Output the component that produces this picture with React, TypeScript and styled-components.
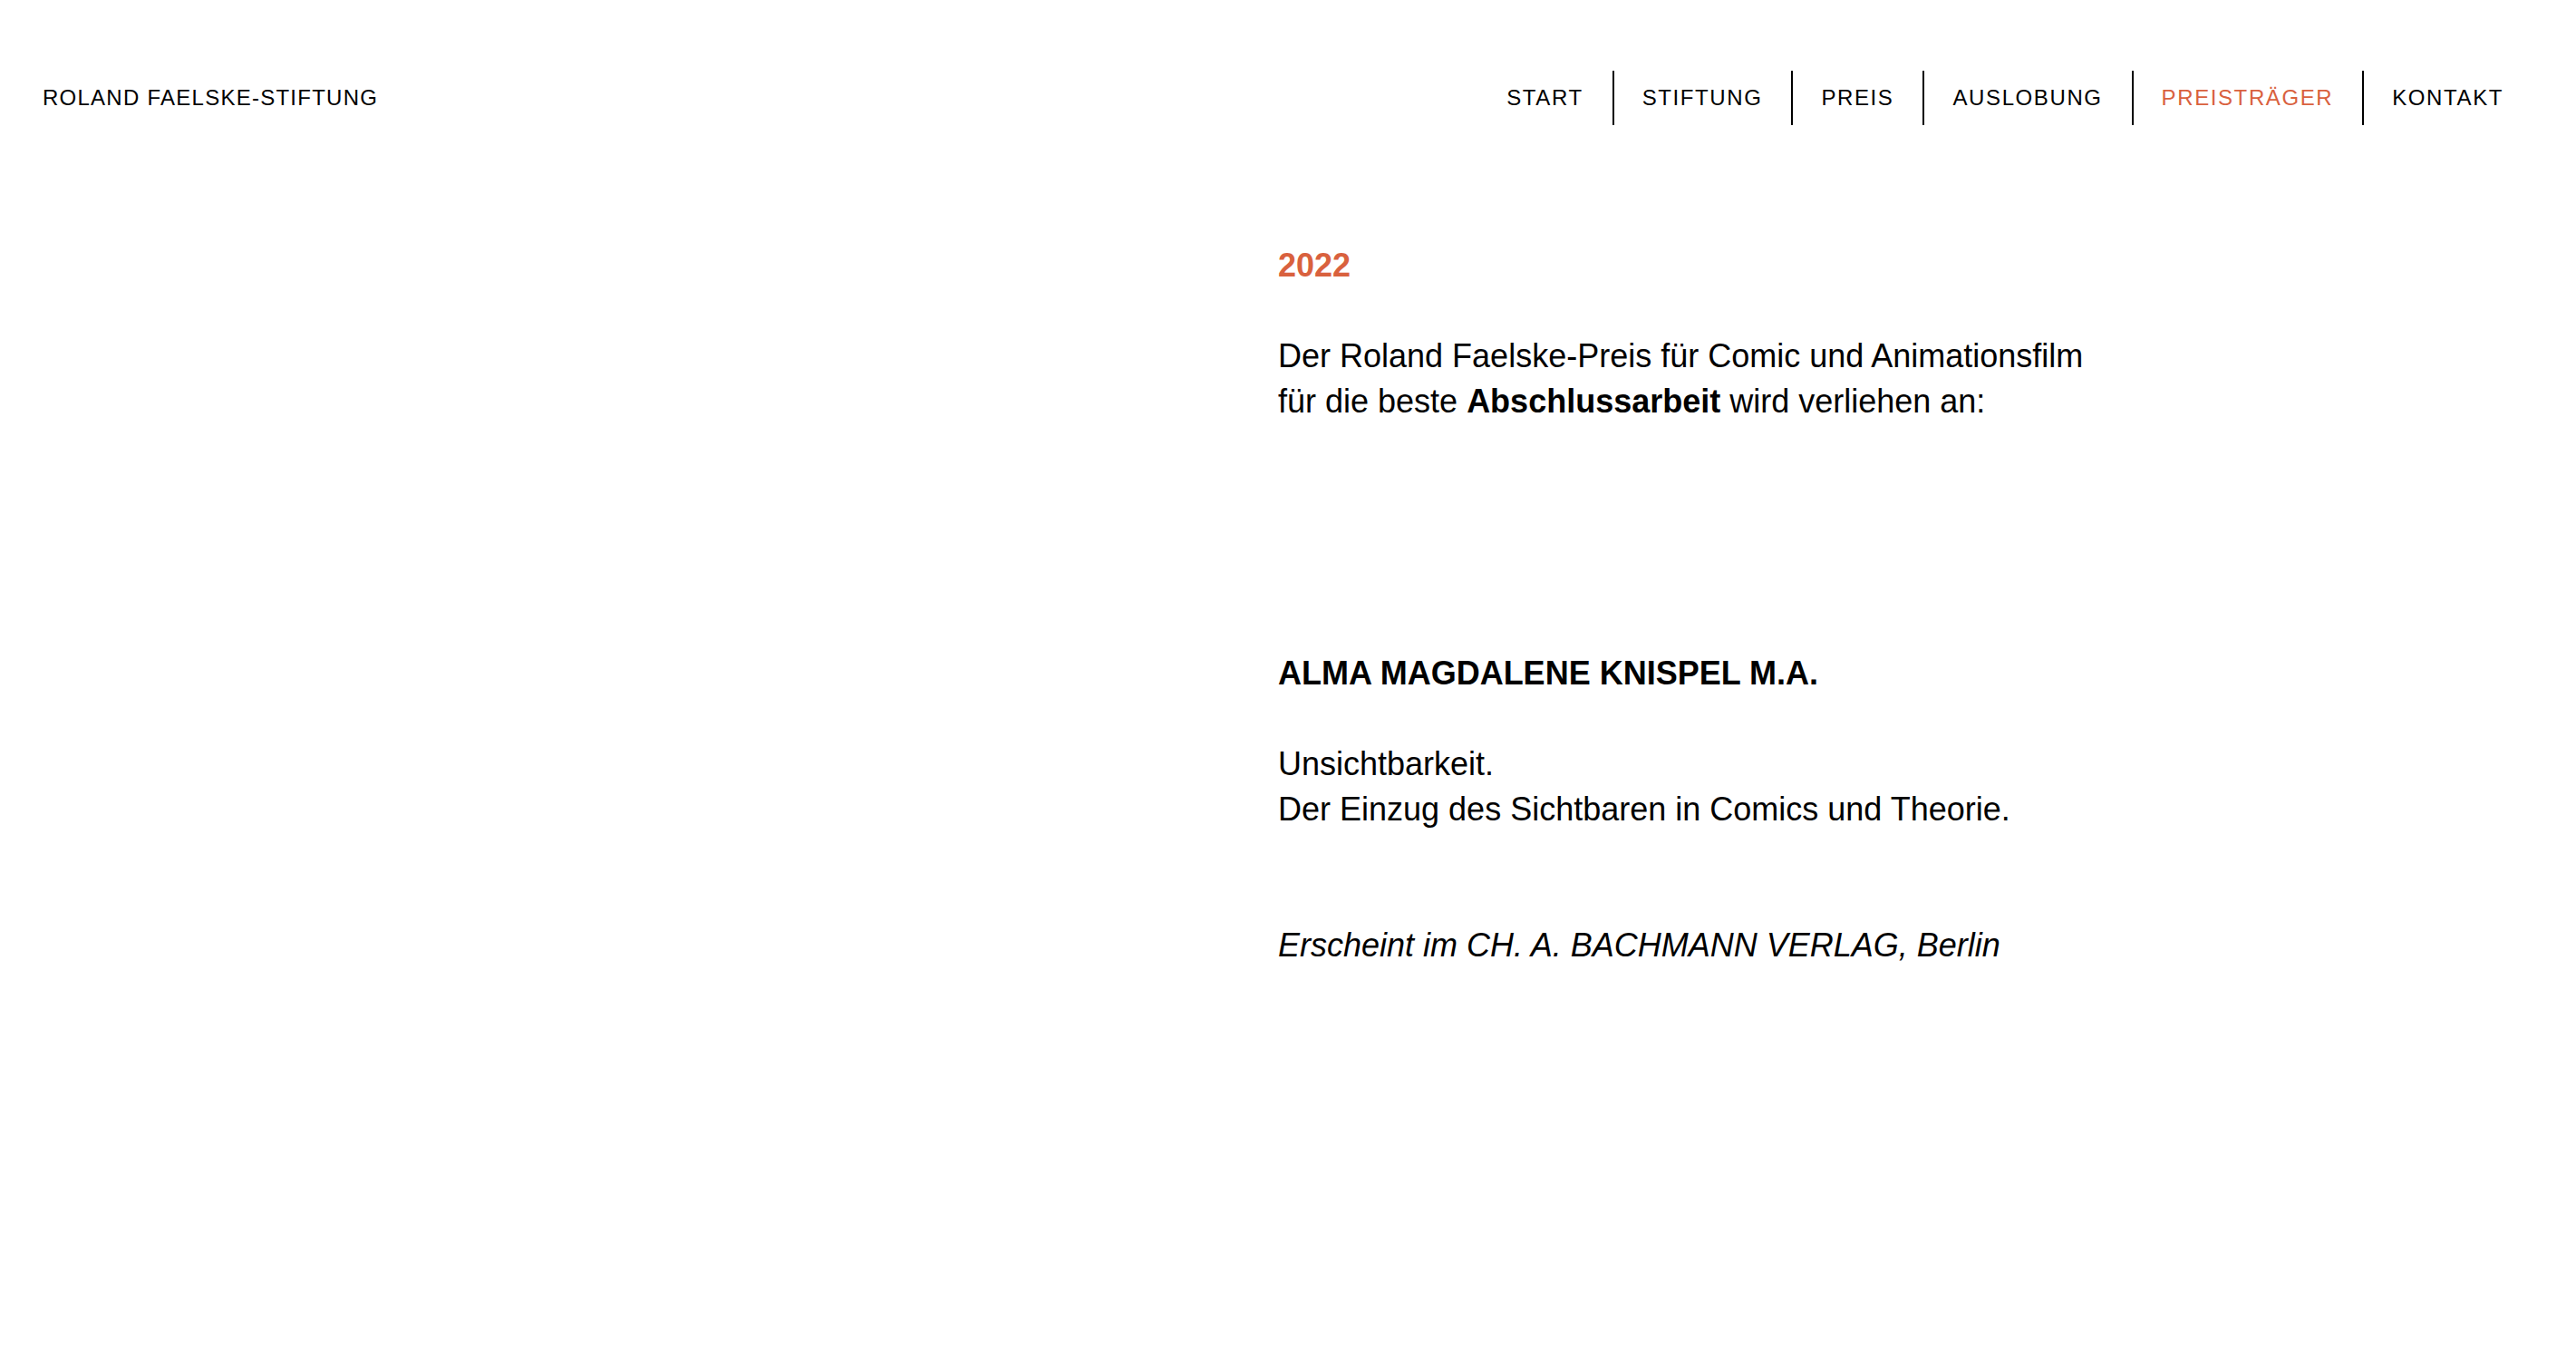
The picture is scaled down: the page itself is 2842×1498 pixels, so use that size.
import React from 'react';
import styled, { createGlobalStyle } from 'styled-components';

const GlobalStyle = createGlobalStyle`
    html, body {
        margin: 0;
        padding: 0;
        background: #ffffff;
        color: #000000;
        font-family: "Liberation Sans", Arial, Helvetica, sans-serif;
    }
`;

const accent = '#d9613e';

const Page = styled.div`
    min-height: 1498px;
    background: #ffffff;
`;

const Header = styled.header`
    display: flex;
    justify-content: space-between;
    align-items: center;
    padding: 78px 48px 0 47px;
`;

const Logo = styled.a`
    font-size: 24px;
    letter-spacing: 1.25px;
    line-height: 60px;
    color: #000000;
    text-decoration: none;
    white-space: nowrap;
`;

const Nav = styled.nav`
    display: flex;
    align-items: center;
`;

const NavLink = styled.a<{ $active?: boolean }>`
    display: block;
    height: 60px;
    line-height: 60px;
    padding: 0 32px 0 31px;
    font-size: 24px;
    letter-spacing: 1.6px;
    color: ${(props) => (props.$active ? accent : '#000000')};
    text-decoration: none;
    white-space: nowrap;
    border-left: 2px solid #000000;
    &:first-child {
        border-left: 0;
    }
`;

const Main = styled.main`
    display: grid;
    grid-template-columns: 1fr 1fr;
    padding: 130px 69px 0 47px;
`;

const Article = styled.article`
    grid-column: 2 / 3;
    font-size: 36px;
    line-height: 50px;
`;

const Year = styled.h2`
    margin: 0 0 50px;
    font-size: 36px;
    line-height: 50px;
    font-weight: 700;
    color: ${accent};
`;

const Text = styled.p<{ $gap?: number }>`
    margin: ${(props) => props.$gap ?? 0}px 0 0;
`;

const Name = styled.h3`
    margin: 250px 0 0;
    font-size: 36px;
    line-height: 50px;
    font-weight: 700;
`;

const Publisher = styled.p`
    margin: 100px 0 0;
    font-style: italic;
`;

const navItems = ['START', 'STIFTUNG', 'PREIS', 'AUSLOBUNG', 'PREISTRÄGER', 'KONTAKT'];

export default function App() {
    return (
        <Page>
            <GlobalStyle />
            <Header>
                <Logo href="#">ROLAND FAELSKE-STIFTUNG</Logo>
                <Nav>
                    {navItems.map((item) => (
                        <NavLink key={item} href="#" $active={item === 'PREISTRÄGER'}>{item}</NavLink>
                    ))}
                </Nav>
            </Header>
            <Main>
                <Article>
                    <Year>2022</Year>
                    <Text>
                        Der Roland Faelske-Preis für Comic und Animationsfilm<br />
                        für die beste <strong>Abschlussarbeit</strong> wird verliehen an:
                    </Text>
                    <Name>ALMA MAGDALENE KNISPEL M.A.</Name>
                    <Text $gap={50}>
                        Unsichtbarkeit.<br />
                        Der Einzug des Sichtbaren in Comics und Theorie.
                    </Text>
                    <Publisher>Erscheint im CH. A. BACHMANN VERLAG, Berlin</Publisher>
                </Article>
            </Main>
        </Page>
    );
}
